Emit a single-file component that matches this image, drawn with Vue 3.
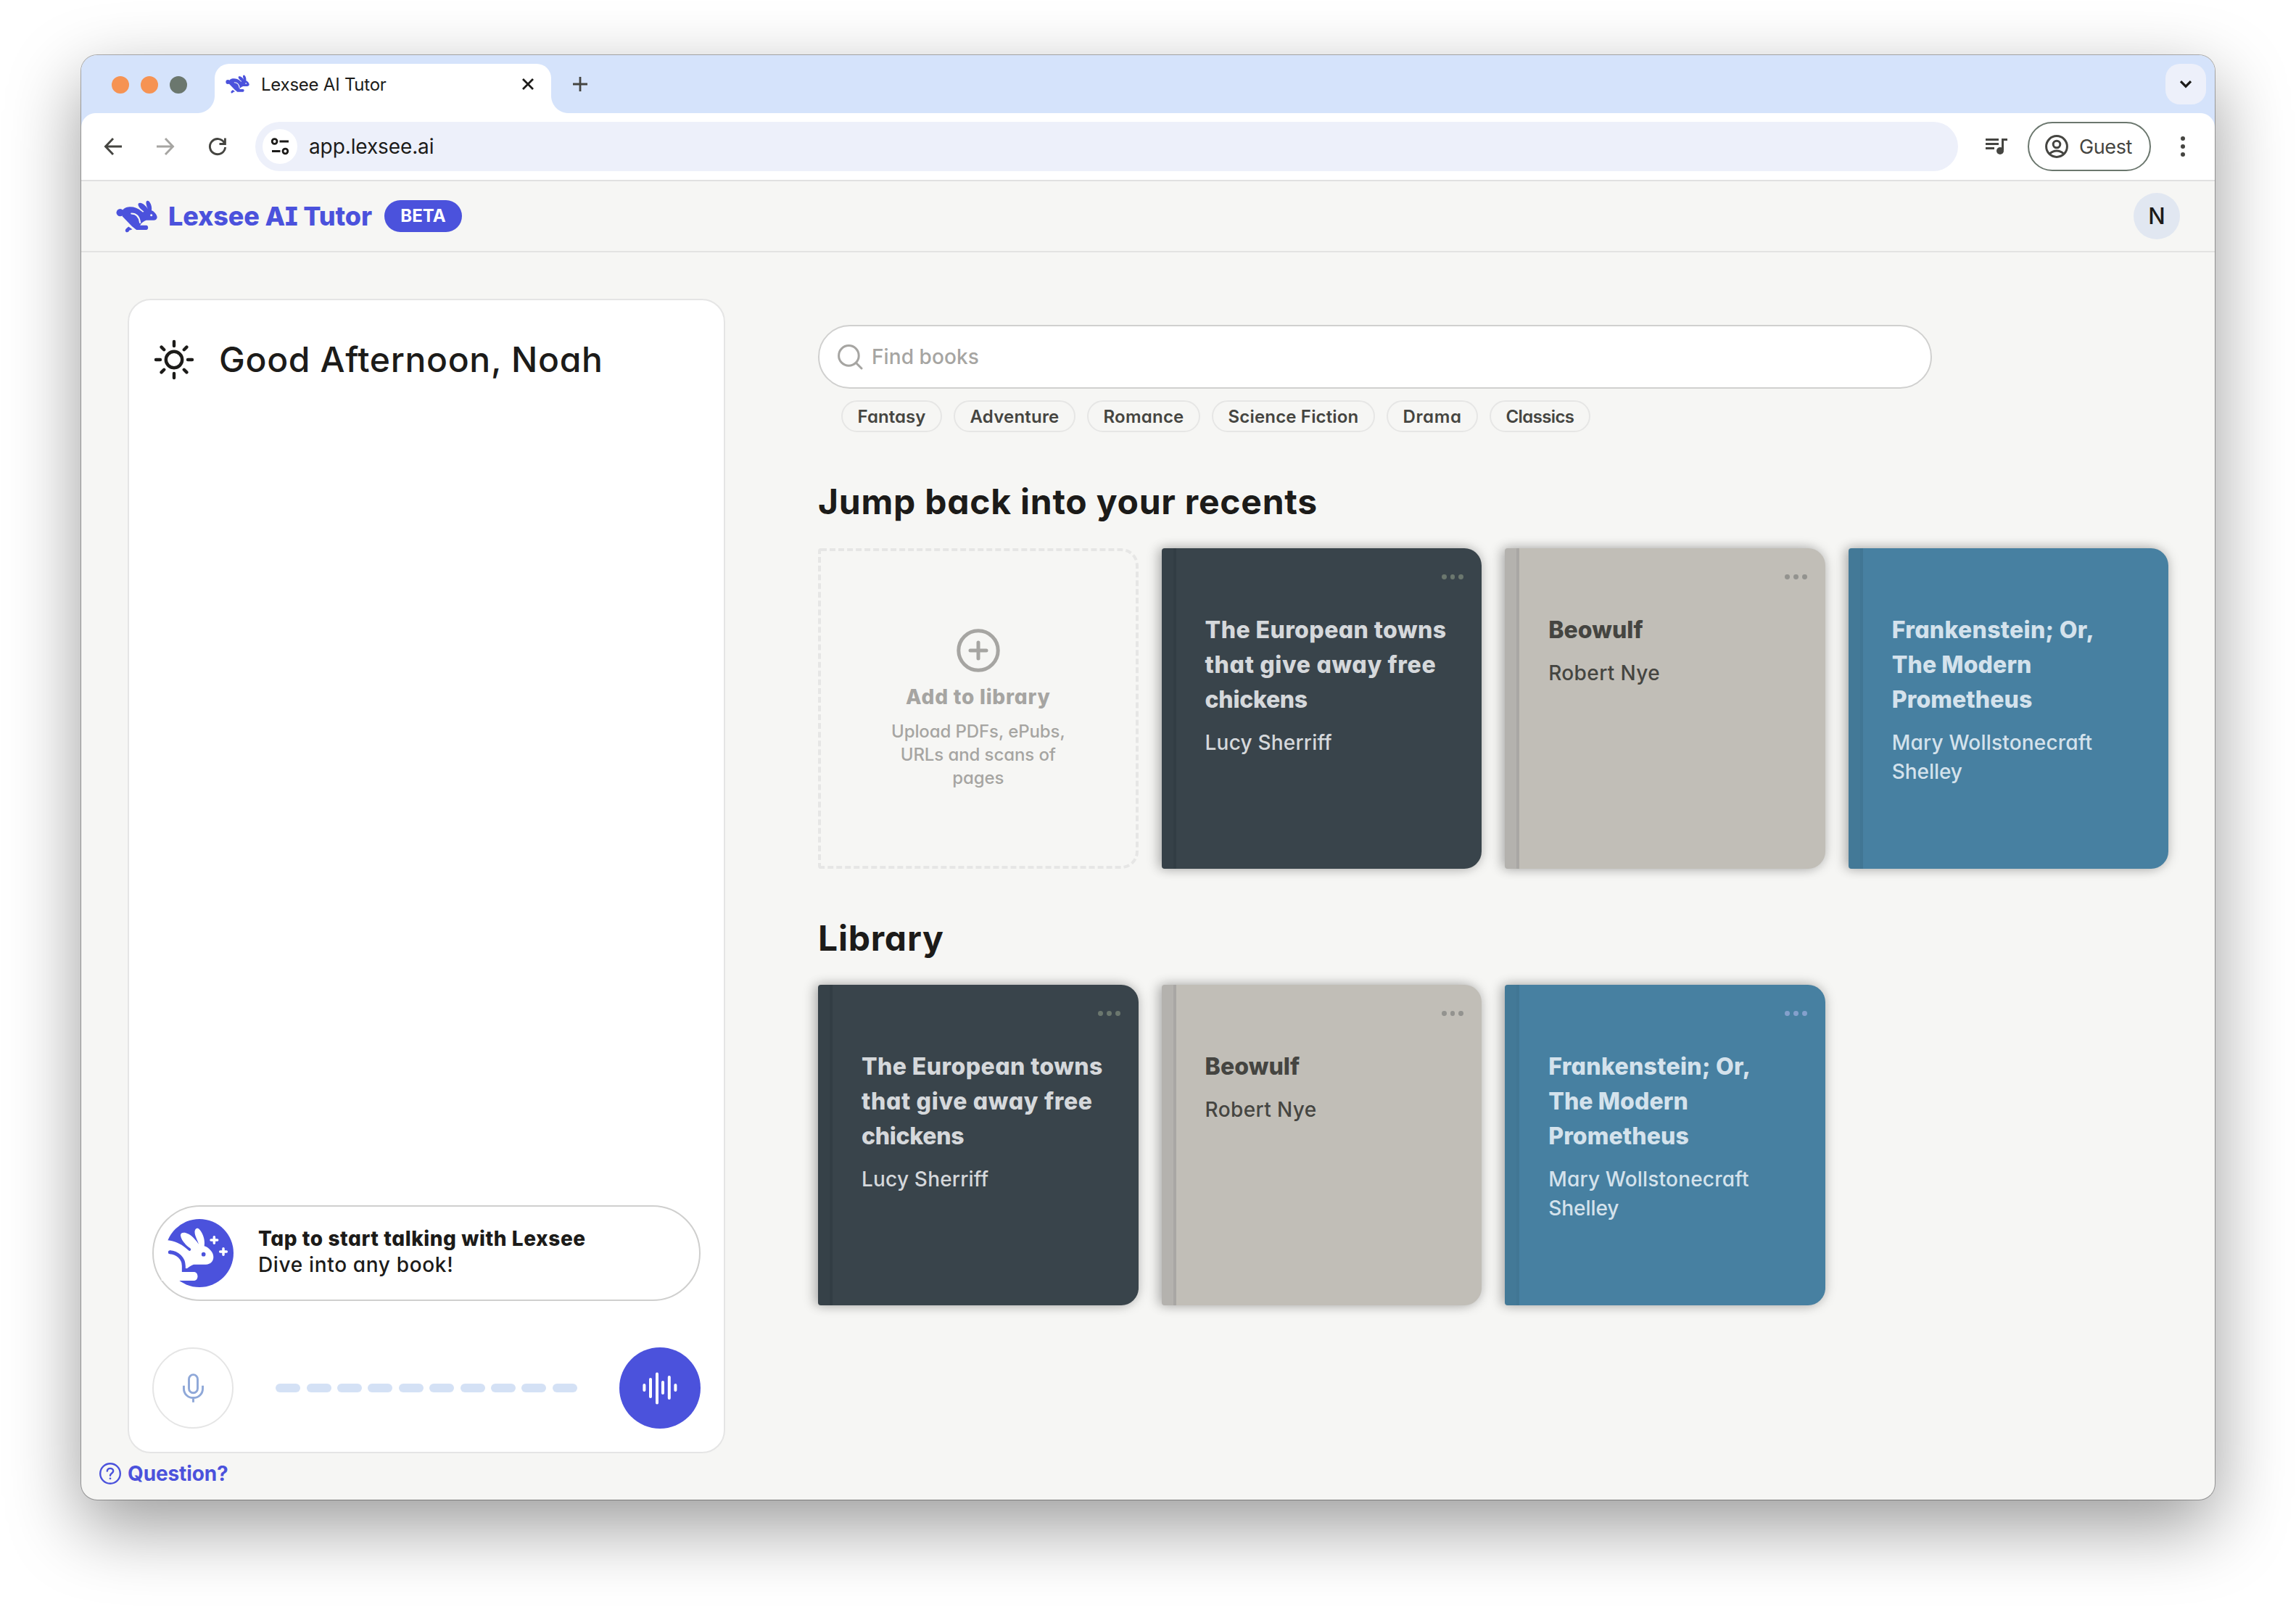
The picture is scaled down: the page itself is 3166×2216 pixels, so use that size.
<script setup>
import { h } from 'vue'

const genres = [
  { label: 'Fantasy', track: 0.003 },
  { label: 'Adventure', track: 0.0085 },
  { label: 'Romance', track: 0.0095 },
  { label: 'Science Fiction', track: 0.007 },
  { label: 'Drama', track: 0.026 },
  { label: 'Classics', track: -0.025 },
]

const books = [
  {
    tone: 'slate',
    title: [
      { text: 'The European towns', track: 0.013 },
      { text: 'that give away free', track: 0.0207 },
      { text: 'chickens', track: -0.009 },
    ],
    author: [{ text: 'Lucy Sherriff', track: 0.007 }],
  },
  {
    tone: 'stone',
    title: [{ text: 'Beowulf', track: 0.002 }],
    author: [{ text: 'Robert Nye', track: 0.0136 }],
  },
  {
    tone: 'ocean',
    title: [
      { text: 'Frankenstein; Or,', track: 0.0093 },
      { text: 'The Modern', track: 0.003 },
      { text: 'Prometheus', track: 0.003 },
    ],
    author: [
      { text: 'Mary Wollstonecraft', track: 0.007 },
      { text: 'Shelley', track: -0.002 },
    ],
  },
]

const shelves = [
  { name: 'Jump back into your recents', add: true, books: books.map((b) => ({ ...b, menu: b.tone !== 'ocean' })) },
  { name: 'Library', add: false, books: books.map((b) => ({ ...b, menu: true })) },
]

const waves = [
  [20.4, 36, 11], [29, 28, 28], [38, 20.5, 44], [46, 32, 19], [54.8, 25, 33], [63.4, 36, 11],
]

const RabbitMark = () =>
  h('svg', { viewBox: '59 76 170 136' }, [
    h('g', { fill: '#4b52dc' }, [
      h('circle', { cx: 75, cy: 128, r: 15.5 }),
      h('path', {
        d: 'M82 122C92 106 106 104 118 104C134 104 150 110 163 121L170 127L174 123C164 116 150 104 150 94C150 87 158 86 165 89C175 93 184 103 190 112C187 104 181 90 184 82C187 76 193 77 198 84C205 94 208 106 206 119C216 122 229 136 229 147C229 155 222 160 213 160L184 160C176 162 170 168 163 173L158 181L184 181C194 181 194 199 184 200L143 200L124 185L84 143Z',
      }),
      h('path', { d: 'M110 186L126 198L113 202C110 210 103 211 99 208C94 203 98 196 102 193Z' }),
    ]),
    h('path', { d: 'M122 132C144 132 155 146 158 170', fill: 'none', stroke: '#f8f8f7', 'stroke-width': 6, 'stroke-linecap': 'round' }),
    h('circle', { cx: 205, cy: 139, r: 4.6, fill: '#f8f8f7' }),
  ])
</script>

<template>
  <main class="desktop">
    <section class="window">
      <header class="tabbar">
        <div class="lights"><i class="amber"></i><i class="amber"></i><i class="gray"></i></div>
        <div class="tab">
          <RabbitMark class="favicon" />
          <span class="tab-title">Lexsee AI Tutor</span>
          <svg class="close" viewBox="0 0 16 16"><path d="M1 1L15 15M15 1L1 15" /></svg>
        </div>
        <svg class="plus" viewBox="0 0 20 20"><path d="M10 0V20M0 10H20" /></svg>
        <div class="tab-search"><svg viewBox="0 0 16 10"><path d="M1 1.2L8 8.2L15 1.2" /></svg></div>
      </header>

      <nav class="toolbar">
        <svg class="nav-icon" viewBox="0 0 24 24"><path d="M12 1L1.5 12L12 23M1.5 12H24" /></svg>
        <svg class="nav-icon off" viewBox="0 0 24 24"><path d="M12 1L22.5 12L12 23M22.5 12H0" /></svg>
        <svg class="nav-icon" viewBox="0 0 24 24">
          <path d="M21.3 7A10.6 10.6 0 1 0 22.6 13" /><path d="M22.4 0.5V8.5H14.5" />
        </svg>
        <div class="url">
          <span class="site">
            <svg viewBox="0 0 24 24">
              <circle cx="4.6" cy="5" r="3.4" /><path d="M11.5 5H24" />
              <circle cx="19.4" cy="18.5" r="3.4" /><path d="M1 18.5H12.5" />
            </svg>
          </span>
          <span>app.lexsee.ai</span>
        </div>
        <svg class="queue" viewBox="0 0 30 24">
          <path d="M0 2.5H18M0 8.5H18M0 14.5H12" />
          <path d="M23.5 17V2.5H30" /><circle cx="20" cy="18" r="5" />
        </svg>
        <div class="guest">
          <svg viewBox="0 0 32 32">
            <circle cx="16" cy="16" r="14.4" /><circle cx="16" cy="13" r="4.8" />
            <path d="M6.5 26C11.5 20.6 20.5 20.6 25.5 26" />
          </svg>
          <span>Guest</span>
        </div>
        <div class="kebab"><i></i><i></i><i></i></div>
      </nav>

      <header class="appbar">
        <RabbitMark class="logo" />
        <span class="brand">Lexsee AI Tutor</span>
        <span class="beta">BETA</span>
        <span class="avatar">N</span>
      </header>

      <div class="content">
        <aside class="side">
          <div class="panel">
            <div class="greeting">
              <svg viewBox="0 0 56 56">
                <circle cx="28" cy="28" r="11.2" />
                <path d="M28 3V9M28 47V53M3 28H9M47 28H53M10.6 10.6L14.2 14.2M41.8 41.8L45.4 45.4M10.6 45.4L14.2 41.8M41.8 14.2L45.4 10.6" />
              </svg>
              <h1>Good Afternoon, Noah</h1>
            </div>

            <div class="talk">
              <svg class="buddy" viewBox="26 30 282 282">
                <circle cx="167" cy="171" r="141" fill="#4b52dc" />
                <path
                  fill="#fff"
                  d="M10 117L36 118C70 122 98 137 122 160Q127 164 130 160Q134 156 129 151C110 138 91 116 89 98C88 86 103 84 115 89C136 96 152 117 164 134C158 115 145 96 148 79C151 67 160 65 168 74C182 91 191 115 187 142C205 147 225 167 225 187C225 206 212 218 194 218L143 218C131 222 122 230 112 237L95 249L146 249C164 251 164 283 146 285L10 285Z"
                />
                <path d="M45 167C76 168 102 194 102 224V249" fill="none" stroke="#4b52dc" stroke-width="15" />
                <path d="M102 234H116L109 249H95Z" fill="#4b52dc" />
                <circle cx="45" cy="167" r="7.5" fill="#4b52dc" />
                <circle cx="184" cy="176" r="8.5" fill="#4b52dc" />
                <path
                  d="M228 104V130M215 117H241M266 152V178M253 165H279"
                  stroke="#fff" stroke-width="10.5" stroke-linecap="round"
                />
              </svg>
              <div class="talk-text">
                <strong>Tap to start talking with Lexsee</strong>
                <span>Dive into any book!</span>
              </div>
            </div>

            <div class="controls">
              <button class="mic">
                <svg viewBox="0 0 30 42">
                  <rect x="8.8" y="1.5" width="12.4" height="26" rx="6.2" />
                  <path d="M1.5 17V21.5C1.5 29 7.5 34.5 15 34.5S28.5 29 28.5 21.5V17M15 34.5V41" />
                </svg>
              </button>
              <div class="level"><i v-for="n in 10" :key="n"></i></div>
              <button class="voice">
                <svg viewBox="0 0 84 84">
                  <rect v-for="(w, i) in waves" :key="i" :x="w[0] - 2" :y="w[1]" width="4" :height="w[2]" rx="2" />
                </svg>
              </button>
            </div>
          </div>
          <a class="question">
            <svg viewBox="0 0 30 30">
              <circle cx="15" cy="15" r="13.8" />
              <path d="M10.8 11.6C11 9 12.8 7.9 15 7.9C17.4 7.9 19.2 9.4 19.2 11.6C19.2 14.4 15 14.6 15 17.8" />
              <circle class="dot" cx="15" cy="21.8" r="1.4" />
            </svg>
            <span>Question?</span>
          </a>
        </aside>

        <div class="main">
          <div class="search">
            <svg viewBox="0 0 34 34"><circle cx="15.4" cy="15.4" r="13.8" /><path d="M25.5 25.5L33 33" /></svg>
            <span>Find books</span>
          </div>
          <div class="chips">
            <span v-for="g in genres" :key="g.label" class="chip" :style="{ letterSpacing: g.track + 'em' }">{{ g.label }}</span>
          </div>

          <section v-for="s in shelves" :key="s.name" class="shelf">
            <h2>{{ s.name }}</h2>
            <div class="row">
              <div v-if="s.add" class="add">
                <svg viewBox="0 0 60 60"><circle cx="30" cy="30" r="27.2" /><path d="M30 19V41M19 30H41" /></svg>
                <strong>Add to library</strong>
                <p>Upload PDFs, ePubs,<br />URLs and scans of<br />pages</p>
              </div>
              <article v-for="b in s.books" :key="b.tone" class="book" :class="b.tone">
                <div v-if="b.menu" class="more"><i></i><i></i><i></i></div>
                <h3>
                  <span v-for="l in b.title" :key="l.text" :style="{ letterSpacing: l.track + 'em' }">{{ l.text }}</span>
                </h3>
                <p>
                  <span v-for="l in b.author" :key="l.text" :style="{ letterSpacing: l.track + 'em' }">{{ l.text }}</span>
                </p>
              </article>
            </div>
          </section>
        </div>
      </div>
    </section>
  </main>
</template>

<style>
body {
  background: #fff;
}
</style>

<style scoped>
* {
  box-sizing: border-box;
}
.desktop {
  height: 2216px;
  padding: 76px 112px 148px;
  overflow: hidden;
  font-family: Inter, "Liberation Sans", sans-serif;
  color: #1c1b19;
  white-space: nowrap;
}
svg {
  display: block;
  flex: none;
  overflow: visible;
}
h1, h2, h3, p {
  margin: 0;
}
.window {
  height: 1992px;
  border-radius: 22px;
  background: #f6f6f4;
  overflow: hidden;
  display: flex;
  flex-direction: column;
  box-shadow: 0 0 0 1px rgba(0, 0, 0, 0.3), 0 36px 100px rgba(0, 0, 0, 0.4);
}

/* browser chrome */
.tabbar {
  height: 80px;
  flex: none;
  background: #d5e3fb;
  display: flex;
  align-items: flex-end;
  padding: 0 12px 0 42px;
}
.lights {
  display: flex;
  gap: 16px;
  align-self: center;
  width: 142px;
  padding-top: 2px;
}
.lights i {
  width: 24px;
  height: 24px;
  border-radius: 50%;
}
.amber {
  background: #f69353;
}
.gray {
  background: #6b776e;
}
.tab {
  position: relative;
  width: 464px;
  height: 68px;
  background: #fff;
  border-radius: 20px 20px 0 0;
  display: flex;
  align-items: center;
  padding: 0 24px 12px 15px;
}
.tab::before,
.tab::after {
  content: "";
  position: absolute;
  bottom: 0;
  width: 24px;
  height: 24px;
}
.tab::before {
  left: -24px;
  background: radial-gradient(circle at 0 0, transparent 23.5px, #fff 24.5px);
}
.tab::after {
  right: -24px;
  background: radial-gradient(circle at 100% 0, transparent 23.5px, #fff 24.5px);
}
.favicon {
  width: 33px;
  height: 26px;
}
.tab-title {
  font-size: 24px;
  letter-spacing: -0.01em;
  margin-left: 16px;
  flex: 1;
}
.close {
  width: 16px;
  height: 16px;
  stroke: #1c1b19;
  stroke-width: 2.8;
}
.plus {
  width: 20px;
  height: 20px;
  margin: 0 auto 30px 30px;
  stroke: #454541;
  stroke-width: 2.8;
}
.tab-search {
  width: 56px;
  height: 56px;
  margin-bottom: 12px;
  border-radius: 20px;
  background: #edf0fa;
  display: flex;
  align-items: center;
  justify-content: center;
}
.tab-search svg {
  width: 16px;
  height: 10px;
  fill: none;
  stroke: #1c1b19;
  stroke-width: 3.2;
}
.toolbar {
  position: relative;
  height: 94px;
  flex: none;
  background: radial-gradient(circle at 100% 100%, #fff 19.5px, #d5e3fb 20.5px) 0 0 / 20px 20px no-repeat,
    radial-gradient(circle at 0 100%, #fff 19.5px, #d5e3fb 20.5px) 100% 0 / 20px 20px no-repeat,
    #fff;
  border-bottom: 2px solid #e1e1e1;
  display: flex;
  align-items: center;
  padding: 0 40px 0 32px;
}
.nav-icon {
  width: 24px;
  height: 24px;
  margin-right: 48px;
  fill: none;
  stroke: #454541;
  stroke-width: 2.9;
}
.nav-icon.off {
  stroke: #a6a5a2;
}
.url {
  width: 2348px;
  height: 68px;
  margin-left: -8px;
  border-radius: 34px;
  background: #edf0fa;
  display: flex;
  align-items: center;
  padding-left: 10px;
  font-size: 28px;
  letter-spacing: -0.004em;
}
.site {
  width: 48px;
  height: 48px;
  border-radius: 50%;
  background: #fff;
  margin-right: 16px;
  display: flex;
  align-items: center;
  justify-content: center;
}
.site svg {
  width: 24px;
  height: 24px;
  fill: none;
  stroke: #1c1b19;
  stroke-width: 2.8;
}
.queue {
  width: 30px;
  height: 24px;
  margin: 0 28px 0 38px;
  fill: none;
  stroke: #454541;
  stroke-width: 3;
}
.queue circle {
  fill: #454541;
  stroke: none;
}
.guest {
  width: 170px;
  height: 68px;
  border: 2px solid #6b776e;
  border-radius: 34px;
  display: flex;
  align-items: center;
  gap: 15px;
  padding-left: 22px;
  font-size: 27px;
  font-weight: 400;
  letter-spacing: -0.015em;
  color: #454541;
}
.guest svg {
  width: 32px;
  height: 32px;
  fill: none;
  stroke: #454541;
  stroke-width: 3;
}
.kebab {
  display: flex;
  flex-direction: column;
  gap: 5px;
  margin-left: 41px;
}
.kebab i {
  width: 6px;
  height: 6px;
  border-radius: 50%;
  background: #454541;
}

/* application */
.appbar,
.content {
  font-feature-settings: "cv11", "cv08";
}
.appbar {
  height: 98px;
  flex: none;
  border-bottom: 2px solid #e3e3e2;
  display: flex;
  align-items: center;
  padding: 0 48px;
}
.logo {
  width: 57px;
  height: 45px;
}
.brand {
  margin-left: 15px;
  width: 283px;
  font-size: 36px;
  font-weight: 800;
  letter-spacing: -0.004em;
  color: #4b52dc;
}
.beta {
  width: 107px;
  height: 44px;
  margin-left: 15px;
  border-radius: 22px;
  background: #4b52dc;
  color: #fff;
  font-size: 24px;
  line-height: 44px;
  font-weight: 700;
  text-align: center;
}
.avatar {
  width: 64px;
  height: 64px;
  margin-left: auto;
  border-radius: 50%;
  background: #e1e7f1;
  font-size: 31px;
  line-height: 64px;
  font-weight: 500;
  text-align: center;
}
.content {
  flex: 1;
  display: flex;
  align-items: flex-start;
  padding-left: 24px;
}
.side {
  width: 864px;
  margin-top: 64px;
}
.panel {
  width: 824px;
  height: 1592px;
  margin-left: 40px;
  border: 2px solid #e5e5e5;
  border-radius: 32px;
  background: #fff;
  display: flex;
  flex-direction: column;
  padding: 52px 32px 32px;
}
.greeting {
  display: flex;
  align-items: center;
  height: 60px;
  margin-bottom: auto;
}
.greeting svg {
  width: 56px;
  height: 56px;
  margin: 0 34px 0 2px;
  fill: none;
  stroke: #1c1b19;
  stroke-width: 4.4;
  stroke-linecap: round;
}
.greeting h1 {
  font-size: 48px;
  line-height: 60px;
  font-weight: 450;
  letter-spacing: 0.0137em;
}
.talk {
  height: 132px;
  border: 2px solid #cfcfce;
  border-radius: 66px;
  display: flex;
  align-items: center;
  padding-left: 16px;
}
.buddy {
  width: 94px;
  height: 94px;
}
.talk-text {
  display: flex;
  flex-direction: column;
  margin-left: 34px;
  padding-bottom: 4px;
  font-size: 28px;
  line-height: 36px;
}
.talk-text strong {
  font-weight: 800;
  letter-spacing: 0.02em;
}
.talk-text span {
  font-weight: 450;
  letter-spacing: 0.0235em;
}
.controls {
  display: flex;
  align-items: center;
  justify-content: space-between;
  margin-top: 64px;
}
.mic,
.voice {
  width: 112px;
  height: 112px;
  border-radius: 50%;
  padding: 0;
  display: flex;
  align-items: center;
  justify-content: center;
}
.mic {
  border: 2px solid #e5e5e5;
  background: #fff;
}
.mic svg {
  width: 29px;
  height: 41px;
  fill: none;
  stroke: #8fa8d8;
  stroke-width: 3;
}
.voice {
  border: 0;
  background: #4b52dc;
}
.voice svg {
  width: 84px;
  height: 84px;
  fill: #fff;
}
.level {
  display: flex;
  gap: 8.4px;
}
.level i {
  width: 34px;
  height: 12px;
  border-radius: 6px;
  background: #d4e1f5;
}
.question {
  display: flex;
  align-items: center;
  height: 36px;
  margin: 10px 0 0 1px;
  color: #4b52dc;
  font-size: 28px;
  font-weight: 650;
  letter-spacing: -0.004em;
}
.question svg {
  width: 30px;
  height: 30px;
  margin-right: 9px;
  fill: none;
  stroke: #4b52dc;
  stroke-width: 2.4;
  stroke-linecap: round;
}
.question .dot {
  fill: #4b52dc;
  stroke: none;
}
.main {
  margin: 100px 0 0 128px;
}
.search {
  width: 1536px;
  height: 88px;
  border: 2px solid #d0d0cf;
  border-radius: 44px;
  background: #fff;
  display: flex;
  align-items: center;
  gap: 13px;
  padding-left: 25px;
  font-size: 28px;
  font-weight: 450;
  letter-spacing: 0.003em;
  line-height: 40px;
  color: #a6a5a2;
}
.search svg {
  width: 34px;
  height: 34px;
  fill: none;
  stroke: #a6a5a2;
  stroke-width: 3;
  stroke-linecap: round;
}
.chips {
  display: flex;
  gap: 16px;
  padding: 16px 0 0 32px;
}
.chip {
  height: 44px;
  border: 2px solid #e6e6e5;
  border-radius: 22px;
  padding: 0 20.5px;
  font-size: 24px;
  line-height: 41px;
  font-weight: 600;
  color: #454541;
}
.shelf h2 {
  margin: 66px 0 34px;
  font-size: 48px;
  line-height: 60px;
  font-weight: 700;
  letter-spacing: 0.016em;
}
.row {
  display: flex;
  gap: 32px;
}
.add,
.book {
  width: 441.6px;
  height: 442px;
  border-radius: 4px 24px 24px 4px;
}
.add {
  border: 4px dashed #e6e6e5;
  padding-top: 2px;
  display: flex;
  flex-direction: column;
  align-items: center;
  justify-content: center;
  color: #a6a5a2;
}
.add svg {
  width: 60px;
  height: 60px;
  fill: none;
  stroke: #a6a5a2;
  stroke-width: 5;
  stroke-linecap: round;
}
.add strong {
  margin: 14px 0 12px;
  font-size: 28px;
  line-height: 40px;
  font-weight: 800;
  letter-spacing: 0.028em;
}
.add p {
  font-size: 24px;
  line-height: 32px;
  font-weight: 450;
  letter-spacing: -0.004em;
  text-align: center;
}
.book {
  position: relative;
  padding: 89px 0 0 60px;
  background-image: linear-gradient(90deg, var(--spine) 16px, var(--hinge) 16px, var(--hinge) 19.6px, transparent 19.6px);
  box-shadow: 0 0 16px rgba(0, 0, 0, 0.26), -8px 0 16px rgba(0, 0, 0, 0.12);
}
.slate {
  --spine: #364148;
  --hinge: #323d44;
  --dots: #6b776e;
  background-color: #39444b;
  color: #d5d8db;
}
.stone {
  --spine: #b4b2ae;
  --hinge: #a9a7a4;
  --dots: #93938f;
  background-color: #c1beb7;
  color: #454541;
}
.ocean {
  --spine: #437997;
  --hinge: #417694;
  --dots: #84a0cc;
  background-color: #4780a1;
  color: #d4e2ec;
}
.more {
  position: absolute;
  top: 36px;
  right: 25px;
  display: flex;
  gap: 5px;
}
.more i {
  width: 6.8px;
  height: 6.8px;
  border-radius: 50%;
  background: var(--dots);
}
.book span {
  display: block;
}
.book h3 {
  font-size: 32px;
  line-height: 48px;
  font-weight: 800;
}
.book p {
  margin-top: 15px;
  font-size: 28px;
  line-height: 40px;
  font-weight: 450;
}
</style>
